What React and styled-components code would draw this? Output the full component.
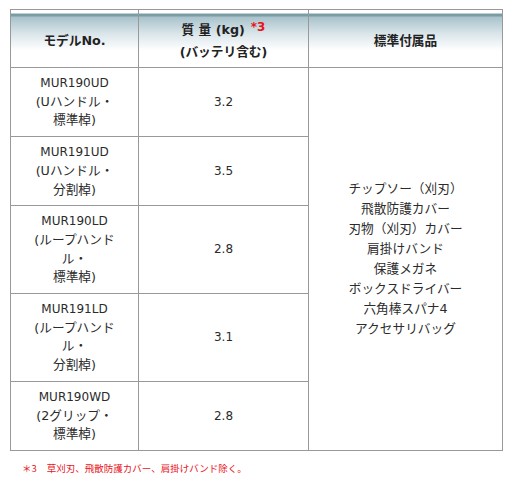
import React from "react";
import styled, { createGlobalStyle } from "styled-components";

const GlobalStyle = createGlobalStyle`
  body {
    margin: 0;
    background: #fff;
    font-family: "DejaVu Sans", "Noto Sans CJK JP", sans-serif;
    color: #2b2b2b;
  }
`;

const Page = styled.div`
  padding: 9px 0 0 10px;
  width: 513px;
  box-sizing: border-box;
`;

const Table = styled.table`
  border-collapse: collapse;
  table-layout: fixed;
  width: 492px;
  font-size: 12px;
`;

const Head = styled.th`
  height: 53px;
  padding: 4px 4px 0;
  border: 1px solid #999;
  font-weight: bold;
  font-size: 12.7px;
  color: #222;
  line-height: 21px;
  text-align: center;
  vertical-align: middle;
  background: linear-gradient(
    to bottom,
    #fff 0,
    #fff 3px,
    #7b9ba5 3px,
    #7b9ba5 6px,
    #a7c1ca 6px,
    #dce7eb 24px,
    #fff 40px
  );
`;

const Mark = styled.span`
  color: #e8141c;
  font-size: 12px;
  position: relative;
  top: -3px;
  margin-left: 6px;
`;

const Cell = styled.td`
  padding: 6px 4px;
  border: 1px solid #999;
  text-align: center;
  vertical-align: middle;
  line-height: ${({ $lh }) => $lh || "18.7px"};
`;

const Line = styled.div`
  white-space: nowrap;
  font-size: ${({ $jp }) => ($jp ? "12.7px" : "12px")};
`;

const Note = styled.p`
  margin: 10px 0 0 12px;
  font-size: 9.5px;
  color: #e8141c;
  font-family: "Noto Sans CJK JP", sans-serif;
`;

const NoteMark = styled.span`
  margin-right: 10px;
`;

const rows = [
  { model: "MUR190UD", desc: ["(Uハンドル・", "標準棹)"], kg: "3.2" },
  { model: "MUR191UD", desc: ["(Uハンドル・", "分割棹)"], kg: "3.5" },
  { model: "MUR190LD", desc: ["(ループハンド", "ル・", "標準棹)"], kg: "2.8" },
  { model: "MUR191LD", desc: ["(ループハンド", "ル・", "分割棹)"], kg: "3.1" },
  { model: "MUR190WD", desc: ["(2グリップ・", "標準棹)"], kg: "2.8" },
];

const accessories = [
  "チップソー（刈刃）",
  "飛散防護カバー",
  "刃物（刈刃）カバー",
  "肩掛けバンド",
  "保護メガネ",
  "ボックスドライバー",
  "六角棒スパナ4",
  "アクセサリバッグ",
];

export default function App() {
  return (
    <Page>
      <GlobalStyle />
      <Table>
        <colgroup>
          <col style={{ width: 128 }} />
          <col style={{ width: 170 }} />
          <col style={{ width: 194 }} />
        </colgroup>
        <thead>
          <tr>
            <Head>モデルNo.</Head>
            <Head>
              <Line $jp>
                質 量 (kg)<Mark>*3</Mark>
              </Line>
              <Line $jp>(バッテリ含む)</Line>
            </Head>
            <Head>標準付属品</Head>
          </tr>
        </thead>
        <tbody>
          {rows.map((r, i) => (
            <tr key={r.model}>
              <Cell>
                <Line>{r.model}</Line>
                {r.desc.map((d) => (
                  <Line $jp key={d}>
                    {d}
                  </Line>
                ))}
              </Cell>
              <Cell>{r.kg}</Cell>
              {i === 0 && (
                <Cell rowSpan={rows.length} $lh="20px">
                  {accessories.map((a) => (
                    <Line $jp key={a}>
                      {a}
                    </Line>
                  ))}
                </Cell>
              )}
            </tr>
          ))}
        </tbody>
      </Table>
      <Note>
        <NoteMark>＊3</NoteMark>草刈刃、飛散防護カバー、肩掛けバンド除く。
      </Note>
    </Page>
  );
}
